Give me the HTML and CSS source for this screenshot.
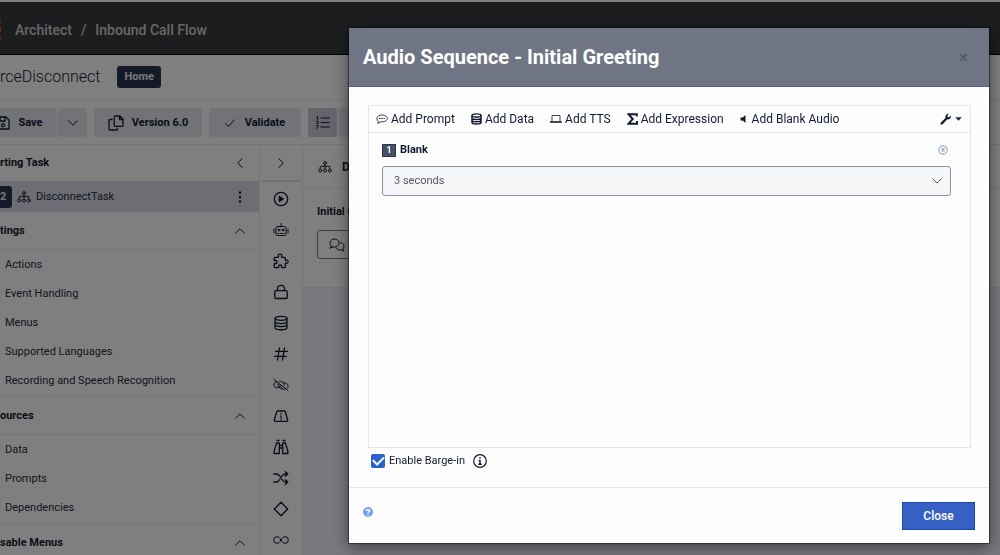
FILE: index.html
```html
<!DOCTYPE html>
<html lang="en">
<head>
<meta charset="utf-8">
<title>Architect</title>
<link rel="stylesheet" href="styles.css">
</head>
<body>
<div class="app">
  <header class="topbar">
    <svg class="brand" width="2" height="24" viewBox="0 0 2 24"><path d="M0 1l1 2-1 3M0 9h1v5H0M0 16l1 4-1 3" fill="#ff4f1f"/></svg>
    <nav class="crumbs"><a href="#">Architect</a><span>/</span><a href="#">Inbound Call Flow</a></nav>
  </header>
  <div class="titlebar"><h1 class="flow-name">rceDisconnect</h1><span class="home">Home</span></div>
  <div class="toolbar">
    <div class="group">
      <button class="btn save"><svg class="i" width="14" height="14" viewBox="0 0 14 14"><path d="M1 1h9l3 3v9H1zM4 1v4h5V1"/><circle cx="7" cy="9.200" r="1.500"/></svg>Save</button>
      <button class="btn narrow" aria-label="Save options"><svg class="i thin" width="10" height="6" viewBox="0 0 10 6"><path d="M.5.7L5 5.200 9.500.7"/></svg></button>
    </div>
    <button class="btn version"><svg class="i" width="16" height="16" viewBox="0 0 16 16"><path d="M7 1h5l3 3v6.500q0 .8-.8.8H7q-.8 0-.8-.8V1.800Q6.200 1 7 1zM11.500 1v3.500H15M4 4.500H2q-1 0-1 1V14q0 1 1 1h6.500q1 0 1-1v-.6"/></svg>Version 6.0</button>
    <button class="btn validate"><svg class="i thin" width="10" height="8" viewBox="0 0 10 8"><path d="M.5 4.500l3 2.800L9.500.7"/></svg>Validate</button>
    <div class="group">
      <button class="btn list on" aria-label="Numbered list"><svg class="i thin" width="14" height="13" viewBox="0 0 14 13"><path d="M5 2h8.500M5 6.500h8.500M5 11h8.500M.8 1.200l.9-.6v3M.6 5.200h1.600v1.100L.7 7.600h1.700M.6 9.600h1.700L1.500 10.800q1.700.8-.9 1.500"/></svg></button>
      <button class="btn list" aria-label="More views"><svg class="i thin" width="10" height="6" viewBox="0 0 10 6"><path d="M.5.700L5 5.200 9.500.7"/></svg></button>
    </div>
  </div>
  <div class="workspace">
    <aside class="sidebar">
      <div class="section-head first"><h2>rting Task</h2><button class="plain" aria-label="Collapse"><svg class="i thin" width="6" height="10" viewBox="0 0 6 10"><path d="M5.300.5L.7 5l4.600 4.500"/></svg></button></div>
      <div class="task"><span class="num">2</span>
        <svg class="i thin" width="14" height="12" viewBox="0 0 14 12"><circle cx="7" cy="2" r="1.400"/><path d="M7 3.500v4M2.200 7.500V6q0-.7.7-.7h8.200q.7 0 .7.7v1.500"/><circle cx="2.200" cy="9.500" r="1.500"/><circle cx="7" cy="9.500" r="1.500"/><circle cx="11.800" cy="9.500" r="1.500"/></svg>
        <span class="task-name">DisconnectTask</span>
        <button class="plain" aria-label="Task menu"><svg width="4" height="12" viewBox="0 0 4 12" fill="#111a33"><circle cx="2" cy="1.500" r="1.200"/><circle cx="2" cy="6" r="1.200"/><circle cx="2" cy="10.500" r="1.200"/></svg></button></div>
      <div class="section-head"><h2>tings</h2><button class="plain" aria-label="Toggle settings"><svg class="i thin" width="10" height="6" viewBox="0 0 10 6"><path d="M.5 5.300L5 .8l4.500 4.500"/></svg></button></div>
      <ul class="links"><li><a href="#">Actions</a></li><li><a href="#">Event Handling</a></li><li><a href="#">Menus</a></li><li><a href="#">Supported Languages</a></li><li><a href="#">Recording and Speech Recognition</a></li></ul>
      <div class="section-head"><h2>ources</h2><button class="plain" aria-label="Toggle resources"><svg class="i thin" width="10" height="6" viewBox="0 0 10 6"><path d="M.5 5.300L5 .8l4.500 4.500"/></svg></button></div>
      <ul class="links"><li><a href="#">Data</a></li><li><a href="#">Prompts</a></li><li><a href="#">Dependencies</a></li></ul>
      <div class="section-head"><h2>sable Menus</h2><button class="plain" aria-label="Toggle menus"><svg class="i thin" width="10" height="6" viewBox="0 0 10 6"><path d="M.5 5.300L5 .8l4.500 4.500"/></svg></button></div>
    </aside>
    <div class="rail">
      <button class="plain expand" aria-label="Expand"><svg class="i thin" width="6" height="10" viewBox="0 0 6 10"><path d="M.7.5L5.300 5 .7 9.500"/></svg></button>
      <button class="plain" aria-label="Run"><svg class="i" width="16" height="16" viewBox="0 0 16 16"><circle cx="8" cy="8" r="6.700"/><path d="M6.300 5.500v5L10.300 8z" fill="#111a33"/></svg></button>
      <button class="plain" aria-label="Bots"><svg class="i thin" width="16" height="16" viewBox="0 0 16 16"><rect x="3" y="4.500" width="10" height="9" rx="1.500"/><path d="M8 1.500v3M1 7v4M15 7v4M5 11.500h1M7.500 11.500h1M10 11.500h1"/><circle cx="6" cy="8" r=".9"/><circle cx="10" cy="8" r=".9"/></svg></button>
      <button class="plain" aria-label="Integrations"><svg class="i" width="16" height="16" viewBox="0 0 16 16"><path d="M1.200 5.200q0-.9.900-.9h3c.7 0 .4-.7.2-1.300C5 1.700 6 1.100 7 1.100s2.100.6 1.700 1.900c-.2.700-.5 1.300.3 1.300h2.400q.9 0 .9.900v1.500c0 .9.500.6 1.100.4 1-.3 1.700.6 1.700 1.500s-.7 1.900-1.700 1.600c-.6-.2-1.100-.5-1.100.4v3.200q0 .9-.9.900H9.200c-.8 0-.7-.5-.5-1.100.3-1-.6-1.600-1.600-1.600s-1.900.6-1.600 1.600c.2.600.3 1.100-.5 1.100H2.100q-.9 0-.9-.9v-2.700c0-.9.600-.7 1.200-.5 1 .2 1.600-.6 1.600-1.600s-.6-1.800-1.600-1.600c-.6.200-1.200.5-1.200-.5z"/></svg></button>
      <button class="plain" aria-label="Security"><svg class="i" width="16" height="16" viewBox="0 0 16 16"><rect x="1.800" y="6.700" width="12.400" height="7.800" rx="1"/><path d="M4.500 6.500V4.800a3.500 3.500 0 0 1 7 0v1.700"/></svg></button>
      <button class="plain" aria-label="Data"><svg class="i" width="16" height="16" viewBox="0 0 16 16"><ellipse cx="8" cy="3.300" rx="6" ry="2"/><path d="M2 3.300v9.400c0 2.700 12 2.700 12 0V3.300M2 6.500c0 2.700 12 2.700 12 0M2 9.600c0 2.700 12 2.700 12 0"/></svg></button>
      <button class="plain" aria-label="Numbers"><svg class="i" width="16" height="16" viewBox="0 0 16 16"><path d="M2.500 5.300h12M1.500 10.300h12M6.500 2L4.500 14M11.500 2l-2 12"/></svg></button>
      <button class="plain" aria-label="Unlink"><svg class="i thin" width="16" height="16" viewBox="0 0 16 16"><path d="M1 2.500l14 11M4 5C.5 4.500-.5 9.500 3 10.500c1.500.5 2.500.3 3.500-.6M5 7c-.6 2.700 2 4.500 4 5 3 .7 3.600-.3 4-.8M6.500 4.500c2.500-.8 5 1 4.700 3.800M10.500 6C14 5 16.500 9 14.500 11M8.500 10.500c-1.300-.6-1.700-1.700-1.500-3"/></svg></button>
      <button class="plain" aria-label="Road"><svg class="i" width="16" height="16" viewBox="0 0 16 16"><path d="M4.600 3h6.800q.7 0 .9.700l2.300 8q.3 1.600-.9 1.600H2.300q-1.200 0-.9-1.600l2.300-8Q3.900 3 4.600 3zM8 5.500v.5M8 7.800v1.500M8 11v.5"/></svg></button>
      <button class="plain" aria-label="Find"><svg class="i" width="16" height="16" viewBox="0 0 16 16"><path d="M6.300 4H3.500C3.300 7.500 1 9 1 14.500h5.300zM9.700 4h2.800c.2 3.500 2.500 5 2.500 10.500H9.700zM6.500 6.500h3M6.500 9h3M4 1.500h2M10 1.500h2"/></svg></button>
      <button class="plain" aria-label="Shuffle"><svg class="i" width="16" height="16" viewBox="0 0 16 16"><path d="M.8 4H3.500c4 0 5 8 9 8h2M.8 12H3.500c1.700 0 2.600-1.300 3.300-2.700M8.600 6.400C9.500 5 10.600 4 12.500 4h2M12.300 1.700L14.800 4l-2.500 2.300M12.300 9.700l2.500 2.300-2.500 2.300"/></svg></button>
      <button class="plain" aria-label="Decision"><svg class="i" width="16" height="16" viewBox="0 0 16 16"><path d="M8 1.300L14.700 8 8 14.700 1.300 8z"/></svg></button>
      <button class="plain" aria-label="Loop"><svg class="i thin" width="16" height="16" viewBox="0 0 16 16"><path d="M8 8C6.500 5.500 5.500 4.700 4 4.700a3.300 3.300 0 0 0 0 6.600c1.500 0 2.500-.8 4-3.300s2.500-3.300 4-3.300a3.300 3.300 0 0 1 0 6.600c-1.500 0-2.500-.8-4-3.300z"/></svg></button>
    </div>
    <main class="editor">
      <div class="editor-head"><svg class="i thin" width="14" height="12" viewBox="0 0 14 12"><circle cx="7" cy="2" r="1.400"/><path d="M7 3.500v4M2.200 7.500V6q0-.7.7-.7h8.200q.7 0 .7.7v1.500"/><circle cx="2.200" cy="9.500" r="1.500"/><circle cx="7" cy="9.500" r="1.500"/><circle cx="11.800" cy="9.500" r="1.500"/></svg><h2>D</h2></div>
      <div class="editor-body"><h3>Initial G</h3>
        <button class="audio" aria-label="Edit audio"><svg class="i thin" width="16" height="14" viewBox="0 0 16 14"><path d="M2.800 8.800C-.8 6 1.200 1 5.500 1c5.200 0 6.200 6.500 1.200 7.800-1 .3-1.700.2-2.300 0L1 10zM11.200 4.500c4 .3 5 4.300 2.600 6.300L15 13l-3-1.200c-2.400.5-4.200-.3-5-2"/></svg></button>
      </div>
    </main>
  </div>
</div>

<div class="backdrop">
  <section class="dialog" role="dialog" aria-labelledby="dialog-title">
    <header class="dialog-head"><h2 id="dialog-title">Audio Sequence - Initial Greeting</h2>
      <button class="plain" aria-label="Dismiss"><svg width="9" height="9" viewBox="0 0 9 9"><path d="M1.200 1.200l6.600 6.600M7.800 1.200L1.200 7.800" stroke="#565e6f" stroke-width="2"/></svg></button></header>
    <div class="dialog-body">
      <div class="sequence">
        <div class="actions">
          <button class="action"><svg class="i thin" width="12" height="10" viewBox="0 0 12 10"><path d="M2.300 7.300C-.4 5.800.3 1 6 1s7 4.700 3.200 6.200C7.900 7.800 6.500 7.900 5 7.700L2 9.300z" stroke-width=".8"/><path d="M3.500 4.400h.6M5.700 4.400h.6M7.900 4.400h.6"/></svg>Add Prompt</button>
          <button class="action"><svg class="i" width="11" height="12" viewBox="0 0 11 12"><ellipse cx="5.500" cy="2.400" rx="4.500" ry="1.600"/><path d="M1 2.400v7.200c0 2 9 2 9 0V2.400M1 4.900c0 2 9 2 9 0M1 7.300c0 2 9 2 9 0" stroke-width="1.500"/></svg>Add Data</button>
          <button class="action"><svg class="i thin" width="12" height="10" viewBox="0 0 12 10"><path d="M2 7V1.500h8V7M.5 7.500h11v1h-11z" stroke-width=".8"/></svg>Add TTS</button>
          <button class="action"><svg width="11" height="12" viewBox="0 0 11 12"><path d="M9.800 3.500V1.200H1.500L5.800 6l-4.300 4.700h8.600V8" fill="none" stroke="#111a33" stroke-width="1.900"/></svg>Add Expression</button>
          <button class="action blank"><svg width="6" height="8" viewBox="0 0 6 8"><path d="M5.500 0v8L2.800 5.500H.5v-3h2.300z" fill="#111a33"/></svg>Add Blank Audio</button>
          <button class="tools" aria-label="Tools"><svg width="11" height="12" viewBox="0 0 11 12"><path d="M1.700 10.500L6.500 5.500" stroke="#111a33" stroke-width="2.400" stroke-linecap="round"/><path d="M9 .8L7.300 2.700l.3 1.200 1.200.3 1.900-1.600C11.300 5 9.400 6.900 7 6.200 4.200 5.200 5.200.3 9 .8z" fill="#111a33"/></svg><svg width="7" height="4" viewBox="0 0 7 4"><path d="M.3.2h6.400L3.500 3.700z" fill="#222a2f"/></svg></button>
        </div>
        <div class="item">
          <div class="item-head"><span class="index">1</span><label for="blank">Blank</label>
            <button class="plain" aria-label="Remove"><svg width="10" height="10" viewBox="0 0 10 10" fill="none" stroke="#8492b8"><circle cx="5" cy="5" r="4.200"/><path d="M3.500 3.500l3 3M6.500 3.500l-3 3" stroke-width="1.300"/></svg></button></div>
          <div class="select-wrap"><select id="blank"><option>3 seconds</option></select><svg class="arrow i thin" width="10" height="6" viewBox="0 0 10 6"><path d="M.7.8L5 5 9.300.8"/></svg></div>
        </div>
      </div>
      <div class="barge"><input type="checkbox" id="barge" checked><label for="barge">Enable Barge-in</label>
        <svg width="14" height="14" viewBox="0 0 14 14" fill="none" stroke="#111a33"><circle cx="7" cy="7" r="6.300" stroke-width="1.200"/><path d="M7 3v1.600M5.700 6.500H7v3.600M5.300 10.200h3.500" stroke-width="1.400"/></svg></div>
    </div>
    <footer class="dialog-foot">
      <a href="#" class="help" aria-label="Help"><svg width="10" height="10" viewBox="0 0 10 10"><circle cx="5" cy="5" r="5" fill="#73a0f5"/><path d="M3.200 3.900C3.200 2 6.800 2 6.600 4 6.500 4.900 5 5 5 6.100M5 7v1.400" fill="none" stroke="#fff" stroke-width="1.400"/></svg></a>
      <button class="close">Close</button>
    </footer>
  </section>
</div>
</body>
</html>
```
FILE: styles.css
```css
* { box-sizing: border-box; }
body { margin: 0; overflow: hidden; background: #fff; color: #111a33; font: 11px/16px Roboto, "Liberation Sans", sans-serif; }
h1, h2, h3, ul { margin: 0; padding: 0; list-style: none; font-size: 11px; }
a { color: inherit; text-decoration: none; }
button { font: inherit; color: inherit; border: 0; padding: 0; background: none; cursor: pointer; }
svg { flex: none; display: block; }
.i { fill: none; stroke: #111a33; stroke-width: 1.3; stroke-linecap: round; stroke-linejoin: round; }
.thin { stroke-width: 1; }
.plain { display: flex; align-items: center; justify-content: center; }

.app { display: flex; flex-direction: column; height: 100vh; overflow: hidden; }
.topbar { flex: none; display: flex; align-items: center; gap: 13px; height: 55px; padding-top: 3px; background: #383a3e; border-top: 2px solid #fff; border-bottom: 1px solid #000; color: #fff; }
.crumbs { display: flex; gap: 9px; font-size: 14px; font-weight: 500; color: #d0d0d0; }
.titlebar { flex: none; display: flex; align-items: center; gap: 17px; height: 45px; border-bottom: 1px solid #e8eaee; }
.flow-name { font-size: 16px; line-height: 20px; font-weight: 300; }
.home { padding: 3px 7px; border-radius: 3px; background: #2a3550; color: #f0f0f0; font-weight: 700; }
.toolbar { flex: none; display: flex; align-items: center; gap: 7px; height: 45px; padding-top: 1px; border-bottom: 1px solid #e8eaee; }
.group { display: flex; gap: 1px; }
.btn { display: flex; align-items: center; justify-content: center; height: 29px; border-radius: 3px; background: #e4e7ee; font-weight: 700; }
.save { gap: 8px; width: 57px; padding-right: 18px; }
.narrow { width: 29px; }
.version { gap: 8px; width: 108px; }
.validate { gap: 10px; width: 92px; }
.list { width: 29px; }
.on { background: #c8cdd9; }

.workspace { flex: 1; display: flex; min-height: 0; }
.sidebar { flex: none; width: 260px; border-right: 1px solid #e8eaee; overflow: hidden; }
.section-head { display: flex; align-items: center; justify-content: space-between; height: 38px; padding-right: 14px; border-bottom: 1px solid #e8eaee; }
.first { height: 36px; border-bottom: 0; }
.first .plain { padding: 0 2px; }
.task { display: flex; align-items: center; gap: 5px; height: 31px; padding-right: 17px; background: #d9dde7; }
.num { width: 12px; padding: 3px 0; background: #2a3550; color: #f0f0f0; border-radius: 0 3px 3px 0; font-weight: 700; }
.task-name { flex: 1; color: #252c40; }
.links { padding: 0 0 1px 5px; border-bottom: 1px solid #e8eaee; color: #252c40; }
.links a { display: block; line-height: 29px; }
.rail { flex: none; width: 43px; padding: 0 2px; border-right: 1px solid #e8eaee; overflow: hidden; }
.rail .plain { width: 100%; height: 31px; }
.rail .expand { height: 37px; margin-bottom: 1px; border-bottom: 2px solid #e0e3e8; }
.editor { flex: 1; background: #f0f2f9; }
.editor-head { display: flex; align-items: center; gap: 10px; height: 44px; padding-left: 15px; background: #fff; border-bottom: 1px solid #e8eaee; }
.editor-head h2 { font-size: 12px; }
.editor-body { height: 99px; padding: 15px 14px; background: #fff; border-bottom: 1px solid #e8eaee; }
.audio { display: flex; align-items: center; width: 100%; height: 29px; margin-top: 10px; padding-left: 11px; border: 1px solid #75809c; border-radius: 3px; }

.backdrop { position: fixed; inset: 0; display: flex; padding: 28px 11px 12px 349px; background: rgba(0, 0, 0, .5); }
.dialog { flex: 1; display: flex; flex-direction: column; background: #fdfdfd; box-shadow: 0 4px 15px rgba(0, 0, 0, .5), 0 0 1px 1px rgba(0, 0, 0, .4); }
.dialog-head { display: flex; align-items: center; justify-content: space-between; height: 59px; padding: 0 21px 0 14px; background: #6f7585; border-bottom: 1px solid #58627a; }
.dialog-head h2 { font-size: 20px; line-height: 24px; color: #fff; }
.dialog-body { flex: 1; display: flex; flex-direction: column; padding: 18px 18px 18px 19px; }
.sequence { flex: 1; border: 1px solid #e2e5ee; }
.actions { display: flex; align-items: center; gap: 16px; height: 27px; padding: 0 8px 0 7px; border-bottom: 1px solid #e4e6ea; }
.action { display: flex; align-items: center; gap: 3px; font-size: 12px; }
.blank { gap: 6px; }
.tools { display: flex; align-items: center; gap: 4px; margin-left: auto; }
.item { padding: 9px 19px 0 13px; }
.item-head { display: flex; align-items: center; gap: 4px; height: 16px; margin-bottom: 8px; font-weight: 700; }
.item-head .plain { margin-left: auto; padding-right: 3px; }
.index { width: 14px; height: 13px; border: 1px solid #2a3550; background: #485369; color: #fff; font-size: 9px; line-height: 11px; text-align: center; }
.select-wrap { position: relative; }
select { appearance: none; display: block; width: 100%; height: 30px; padding: 0 11px; border: 1px solid #8b93a6; border-radius: 3px; background: #f5f6f8; color: #53575f; font: inherit; }
.arrow { position: absolute; right: 9px; top: 12px; pointer-events: none; stroke: #555b66; }
.barge { display: flex; align-items: center; gap: 4px; padding: 5px 3px 0; }
.barge input { appearance: none; width: 14px; height: 14px; margin: 0; border-radius: 2px; background: #2a60c8; display: grid; place-items: center; }
.barge input:checked::before { content: ""; width: 9px; height: 5px; margin-bottom: 3px; border: solid #fff; border-width: 0 0 2px 2px; rotate: -45deg; }
.barge svg { margin-left: 4px; }
.dialog-foot { display: flex; justify-content: space-between; align-items: center; height: 56px; padding: 0 14px; border-top: 1px solid #e6e7ea; }
.help { padding-bottom: 8px; }
.close { width: 73px; height: 28px; border: 1px solid #1c47b0; background: #3660c4; color: #fff; font-size: 12px; font-weight: 500; }
```
